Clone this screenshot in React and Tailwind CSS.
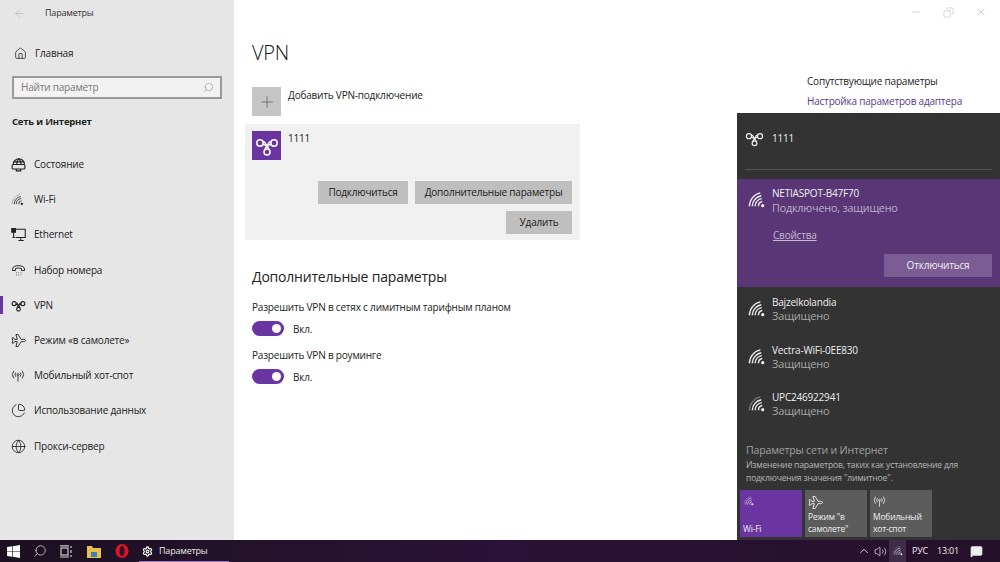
import React from "react";
import { Home, Search, Globe, PieChart, Plus, X, Minus, Copy, ChevronUp, Volume2, MessageSquare, Settings, ArrowLeft } from "lucide-react";

const Knot = ({ size = 20, color = "currentColor", sw = 1.5 }) => (
  <svg width={size} height={size} viewBox="0 0 24 24" fill="none" stroke={color} strokeWidth={sw}>
    <circle cx="5" cy="9" r="3.200" />
    <circle cx="19" cy="9" r="3.200" />
    <circle cx="12" cy="18" r="3" />
    <path d="M7.800 7.500C10.500 7.500 11 11 12 12.500 13 11 13.500 7.500 16.200 7.500" />
    <path d="M7.800 10.500C10.500 10.500 13.500 13 14.200 16M16.200 10.500C13.500 10.500 10.500 13 9.800 16" />
  </svg>
);

const Wifi = ({ size = 20, color = "currentColor", faint = false, sw = 1.5 }) => (
  <svg width={size} height={size} viewBox="0 0 20 20" fill="none" stroke={color} strokeWidth={sw}>
    <circle cx="15.500" cy="15.500" r="1.700" fill={color} stroke="none" />
    <path d="M11 16a5 5 0 0 1 4-5" />
    <path d="M7.500 16a8.500 8.500 0 0 1 7-8" />
    <path d="M4.500 16a11.500 11.500 0 0 1 9.500-11" />
    <path d="M1.500 16a14.500 14.500 0 0 1 11.500-14" opacity={faint ? 0.35 : 1} />
  </svg>
);

const PlaneOutline = ({ size = 15, sw = 1.2 }) => (
  <svg width={size} height={size} viewBox="0 0 20 20" fill="none" stroke="currentColor" strokeWidth={sw} strokeLinejoin="round">
    <path d="M1.500 6.500h2l1.500 2h3.500L6.500 2h3l4 6.500h3.500c1.500 0 2.500.7 2.500 1.500s-1 1.500-2.500 1.500h-3.500l-4 6.500h-3l2-6.500H5l-1.500 2h-2l.8-3.500z" />
  </svg>
);

const Hotspot = ({ size = 16, color = "currentColor" }) => (
  <svg width={size} height={size} viewBox="0 0 20 20" fill="none" stroke={color} strokeWidth="1.200">
    <circle cx="10" cy="8" r="1.400" />
    <path d="M10 9.500V18M6.800 5a5 5 0 0 0 0 6M13.200 5a5 5 0 0 1 0 6M4 2.500a9 9 0 0 0 0 11M16 2.500a9 9 0 0 1 0 11" />
  </svg>
);

const DialUp = ({ size = 15 }) => (
  <svg width={size} height={size} viewBox="0 0 20 20" fill="none" stroke="currentColor" strokeWidth="1.300">
    <path d="M2 8c0-6 16-6 16 0v2h-4V7.500c-2-1-6-1-8 0V10H2z" />
    <path d="M7 13h.8M10 13h.8M13 13h.8M7 16h.8M10 16h.8M13 16h.8" />
  </svg>
);

const StatusIcon = ({ size = 15 }) => (
  <svg width={size} height={size} viewBox="0 0 20 20" fill="none" stroke="currentColor" strokeWidth="1.500">
    <path d="M3 10a7.500 7.500 0 0 1 15 0" />
    <path d="M10.500 2.500c-2.500 2-3 5-3 7.500M10.500 2.500c2.500 2 3 5 3 7.500M3.500 6.500h14" />
    <rect x="1.500" y="10" width="17" height="6" rx="1.500" />
    <path d="M7 16v2.500h6V16" />
  </svg>
);

const EthernetIcon = ({ size = 15 }) => (
  <svg width={size} height={size} viewBox="0 0 20 20" fill="none" stroke="currentColor" strokeWidth="1.400">
    <path d="M6 3h13v11H6M10 18h7M13 14v4" />
    <path d="M1 2h5v5H1z" fill="currentColor" />
    <path d="M3.500 7v7M2 14h3" />
  </svg>
);

const nav = [
  [<StatusIcon />, "Состояние"],
  [<Wifi size={14} faint sw={1.2} />, "Wi-Fi"],
  [<EthernetIcon />, "Ethernet"],
  [<DialUp />, "Набор номера"],
  [<Knot size={15} sw={1.7} />, "VPN", true],
  [<PlaneOutline size={15} />, "Режим «в самолете»"],
  [<Hotspot size={14} />, "Мобильный хот-спот"],
  [<PieChart size={15} strokeWidth={1.4} />, "Использование данных"],
  [<Globe size={15} strokeWidth={1.3} />, "Прокси-сервер"],
];

const Toggle = () => (
  <div className="flex items-center gap-[9px] h-[14px]">
    <div className="w-[32px] h-[15px] rounded-full bg-[#6a35a0] flex items-center justify-end pr-[3px]">
      <div className="w-[9px] h-[9px] rounded-full bg-white" />
    </div>
    <span className="text-[10px] leading-[14px] pt-[2px] text-[#222]">Вкл.</span>
  </div>
);

const Btn = ({ w, children }) => (
  <div className={`${w} h-[23px] bg-[#bfbfbf] flex items-center justify-center text-[10px] text-[#1a1a1a]`}>{children}</div>
);

const Net = ({ name, faint }) => (
  <div className="h-[47.500px] flex pl-[11px] pt-[3px]">
    <div className="w-[24px] pt-[4px] text-[#eee]"><Wifi size={19} faint={faint} /></div>
    <div>
      <div className="text-[10px] leading-[12px] text-[#eee]">{name}</div>
      <div className="text-[11px] leading-[15px] text-[#a5a5a5]">Защищено</div>
    </div>
  </div>
);

const Tile = ({ active, icon, children }) => (
  <div className={`w-[62px] h-[47px] flex flex-col justify-between px-[3px] pt-[5px] pb-[2px] text-[8.500px] leading-[12px] text-[#eee] ${active ? "bg-[#6a35a0]" : "bg-[#5c5c5c]"}`}>
    <div>{icon}</div>
    <div>{children}</div>
  </div>
);

export default function App() {
  return (
    <div className="relative w-[1000px] h-[562px] overflow-hidden flex flex-col bg-white font-['Open_Sans','Noto_Sans',sans-serif] tracking-[-0.2px]">
      <div className="flex h-[540px]">
        <aside className="w-[234px] bg-[#e6e6e6] text-[#222] flex flex-col">
          <div className="h-[26px] flex items-center pl-[13px]">
            <ArrowLeft size={13} strokeWidth={1} className="text-[#aaa]" />
            <span className="ml-[19px] text-[9px] text-[#333]">Параметры</span>
          </div>
          <div className="h-[34px] mt-[10px] flex items-center pl-[14px]">
            <Home size={13} strokeWidth={1.4} />
            <span className="ml-[8px] text-[10px]">Главная</span>
          </div>
          <div className="mx-[12px] mt-[6px] h-[23px] border-2 border-[#9a9a9a] bg-[#f2f2f2] flex items-center justify-between pl-[7px] pr-[6px]">
            <span className="text-[10px] text-[#777]">Найти параметр</span>
            <Search size={11} strokeWidth={1.2} className="text-[#888] -scale-x-100" />
          </div>
          <div className="pl-[12px] mt-[14px] text-[9.500px] font-bold leading-[18px]">Сеть и Интернет</div>
          <div className="mt-[16px] flex flex-col">
            {nav.map(([icon, label, active]) => (
              <div key={label} className="relative h-[35.200px] flex items-center pl-[11px]">
                {active && <div className="absolute left-0 top-[8px] w-[3px] h-[18px] bg-[#6a35a0]" />}
                <div className="w-[23px] flex">{icon}</div>
                <span className="text-[10px]">{label}</span>
              </div>
            ))}
          </div>
        </aside>

        <main className="flex-1 flex bg-white text-[#222]">
          <div className="w-[346px] ml-[11px] flex flex-col">
            <h1 className="pl-[7px] mt-[38px] text-[20px] leading-[30px] font-light text-[#111]">VPN</h1>
            <div className="pl-[7px] mt-[19px] flex">
              <div className="w-[29px] h-[29px] bg-[#c6c6c6] flex items-center justify-center">
                <Plus size={18} strokeWidth={0.8} className="text-[#444]" />
              </div>
              <span className="ml-[7px] text-[10px] leading-[16px]">Добавить VPN-подключение</span>
            </div>
            <div className="mt-[8px] w-[335px] h-[116px] bg-[#f1f1f1] px-[7px] pt-[7px]">
              <div className="flex">
                <div className="w-[29px] h-[29px] bg-[#6a35a0] flex items-center justify-center text-white"><Knot size={24} /></div>
                <span className="ml-[7px] text-[10px] leading-[15px]">1111</span>
              </div>
              <div className="mt-[21px] flex justify-end gap-[7px] pr-[1px]">
                <Btn w="w-[90px]">Подключиться</Btn>
                <Btn w="w-[157px]">Дополнительные параметры</Btn>
              </div>
              <div className="mt-[7px] flex justify-end pr-[1px]">
                <Btn w="w-[66px]">Удалить</Btn>
              </div>
            </div>
            <div className="pl-[7px]">
              <h2 className="mt-[26px] text-[14px] leading-[22px] text-[#222]">Дополнительные параметры</h2>
              <p className="mt-[12px] text-[10px] leading-[15px]">Разрешить VPN в сетях с лимитным тарифным планом</p>
              <div className="mt-[6px]"><Toggle /></div>
              <p className="mt-[12px] text-[10px] leading-[15px] translate-y-[1px]">Разрешить VPN в роуминге</p>
              <div className="mt-[7px]"><Toggle /></div>
            </div>
          </div>
          <div className="flex-1 flex flex-col pl-[216px]">
            <div className="h-[24px] flex items-center gap-[21px] pl-[103px] text-[#aaa]">
              <Minus size={12} strokeWidth={1} />
              <Copy size={11} strokeWidth={1} className="-scale-x-100" />
              <X size={12} strokeWidth={1} />
            </div>
            <div className="mt-[50px] text-[10px] leading-[15px] text-[#222] whitespace-nowrap">Сопутствующие параметры</div>
            <div className="mt-[5px] text-[10px] leading-[15px] text-[#5a3a8a] whitespace-nowrap">Настройка параметров адаптера</div>
          </div>
        </main>
      </div>

      <footer className="h-[22px] bg-gradient-to-r from-[#1c1020] via-[#2a1238] to-[#25102a] flex items-center text-white">
        <div className="w-[139px] flex items-center pl-[7px]">
          <svg width="13" height="13" viewBox="0 0 20 20" fill="#fff"><path d="M0 3l8-1v7.500H0zM9 2l11-2v9.500H9zM0 10.500h8V18l-8-1zM9 10.500h11V20L9 18z" /></svg>
          <Search size={14} strokeWidth={1.3} className="ml-[13px] -scale-x-100 text-[#ddd]" />
          <svg width="14" height="13" viewBox="0 0 14 13" fill="none" stroke="#ccc" strokeWidth="1.200" className="ml-[12px]"><rect x="2" y="3" width="7" height="7" /><path d="M1 .8h9M1 12h9M12 1v2M12 5v3M12 10v2" /></svg>
          <svg width="14" height="13" viewBox="0 0 14 13" className="ml-[14px]"><path d="M0 1h5l1 2h8v10H0z" fill="#e8c04a" /><rect x="4" y="7" width="6" height="5" fill="#3a7fc0" /></svg>
          <svg width="14" height="14" viewBox="0 0 14 14" className="ml-[14px]"><ellipse cx="7" cy="7" rx="6.500" ry="7" fill="#e0141e" /><ellipse cx="7" cy="7" rx="2.500" ry="5" fill="#2a1238" /></svg>
        </div>
        <div className="relative w-[90px] h-full flex items-center pl-[3px]">
          <Settings size={11} strokeWidth={2.500} />
          <span className="ml-[6px] text-[9px] text-[#e8e8e8]">Параметры</span>
          <div className="absolute bottom-0 left-0 right-0 h-[1px] bg-[#9a78c0]" />
        </div>
        <div className="ml-auto flex items-center h-full text-[#eee]">
          <ChevronUp size={14} strokeWidth={1.500} />
          <Volume2 size={13} strokeWidth={1.300} className="ml-[3px]" />
          <div className="ml-[2px] w-[17px] h-full bg-[#3f2c4a] flex items-center justify-center"><Wifi size={12} faint sw={1} /></div>
          <span className="ml-[6px] text-[9px] w-[15px]">РУС</span>
          <span className="ml-[10px] text-[9px] w-[20px]">13:01</span>
          <MessageSquare size={13} strokeWidth={1.500} fill="#eee" className="ml-[13px] mr-[17px]" />
        </div>
      </footer>

      <section className="absolute left-[737px] top-[113px] w-[263px] h-[427px] bg-[#333333] flex flex-col text-white">
        <div className="h-[57px] mx-[8px] flex items-center border-b border-[#555] pb-[5px]">
          <Knot size={19} color="#eee" />
          <span className="ml-[8px] text-[10px] text-[#eee]">1111</span>
        </div>
        <div className="mt-[9px] h-[108px] bg-[#5a3677] pl-[11px] pt-[7px] flex flex-col">
          <div className="flex">
            <div className="w-[24px] pt-[5px] text-[#eee]"><Wifi size={19} /></div>
            <div>
              <div className="text-[10px] leading-[14px] text-[#f0f0f0]">NETIASPOT-B47F70</div>
              <div className="text-[10.800px] leading-[15px] text-[#bcaec8]">Подключено, защищено</div>
            </div>
          </div>
          <div className="ml-[25px] mt-[13px] text-[10px] leading-[14px] text-[#c5b8d0] underline">Свойства</div>
          <div className="self-end mr-[8px] mt-[12px] w-[108px] h-[23px] bg-[#7b5c94] flex items-center justify-center text-[10px] text-[#f0f0f0]">Отключиться</div>
        </div>
        <div className="mt-[6px] flex flex-col">
          <Net name="Bajzelkolandia" />
          <Net name="Vectra-WiFi-0EE830" />
          <Net name="UPC246922941" faint />
        </div>
        <div className="mt-auto">
          <div className="pl-[9px] text-[10.600px] leading-[15px] text-[#a0a0a0]">Параметры сети и Интернет</div>
          <div className="pl-[9px] mt-[1px] text-[8.600px] leading-[13px] text-[#b5b5b5]">Изменение параметров, таких как установление для<br />подключения значения "лимитное".</div>
          <div className="mt-[5px] mb-[3px] pl-[3px] flex gap-[3px]">
            <Tile active icon={<Wifi size={12} sw={1} faint />}>Wi-Fi</Tile>
            <Tile icon={<PlaneOutline size={15} />}>Режим "в<br />самолете"</Tile>
            <Tile icon={<Hotspot size={13} />}>Мобильный<br />хот-спот</Tile>
          </div>
        </div>
      </section>
    </div>
  );
}
